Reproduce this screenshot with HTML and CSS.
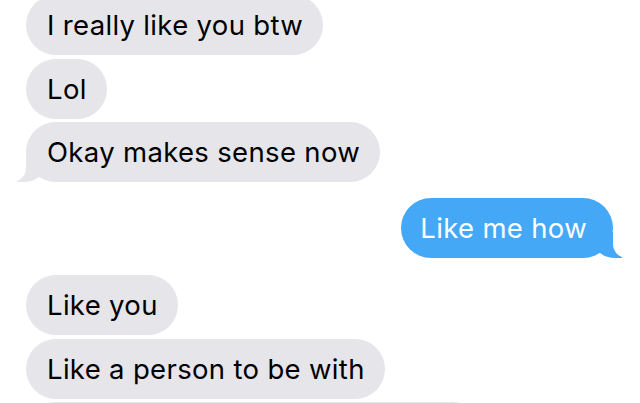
FILE: index.html
```html
<!DOCTYPE html>
<html>
<head>
    <title>Messages</title>
    <link rel="stylesheet" href="styles.css">
</head>
<body>
    <div class="thread">
        <div class="group them">
            <div class="msg">I really like you btw</div>
            <div class="msg">Lol</div>
            <div class="msg tail">Okay makes sense now</div>
        </div>

        <div class="group me">
            <div class="msg tail">Like me how</div>
        </div>

        <div class="group them">
            <div class="msg">Like you</div>
            <div class="msg">Like a person to be with</div>
            <div class="msg partial">&nbsp;</div>
        </div>
    </div>
</body>
</html>
```

FILE: styles.css
```css
body {
    margin: 0;
    background-color: #ffffff;
    font-family: Inter, "Noto Sans", sans-serif;
    overflow: hidden;
}

.thread {
    display: flex;
    flex-direction: column;
    gap: 16px;
    margin-top: -5px;
    padding: 0 27px 0 26px;
}

.group {
    display: flex;
    flex-direction: column;
    gap: 3.5px;
}

.group.them {
    align-items: flex-start;
}

.group.me {
    align-items: flex-end;
}

.group.me + .group {
    margin-top: 1px;
}

.msg {
    position: relative;
    height: 60px;
    box-sizing: border-box;
    padding: 13px 20px 13px 21px;
    border-radius: 30px;
    font-size: 27.5px;
    line-height: 34px;
    letter-spacing: 0.33px;
    white-space: nowrap;
}

.them .msg {
    background-color: #e5e5ea;
    color: #000000;
}

.me .msg {
    background-color: #44a8f6;
    color: #ffffff;
    padding: 13px 26px 13px 19px;
}

.msg.partial {
    width: 456px;
}

/* little tail on the last bubble of a group */
.msg.tail::before,
.msg.tail::after {
    content: "";
    position: absolute;
    bottom: 0;
    height: 26px;
}

.them .msg.tail::before {
    left: -9px;
    width: 30px;
    background-color: #e5e5ea;
    border-bottom-right-radius: 22px;
}

.them .msg.tail::after {
    left: -20px;
    width: 20px;
    background-color: #ffffff;
    border-bottom-right-radius: 14px;
}

.me .msg.tail::before {
    right: -9px;
    width: 30px;
    background-color: #44a8f6;
    border-bottom-left-radius: 22px;
}

.me .msg.tail::after {
    right: -20px;
    width: 20px;
    background-color: #ffffff;
    border-bottom-left-radius: 14px;
}
```
